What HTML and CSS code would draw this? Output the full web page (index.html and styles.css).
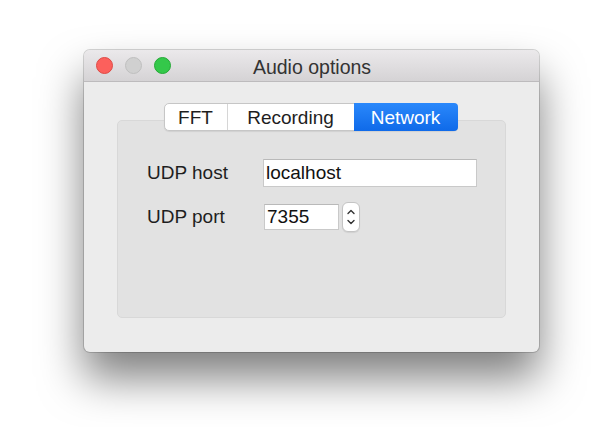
FILE: index.html
```html
<!DOCTYPE html>
<html>
<head>
<meta charset="utf-8">
<link rel="stylesheet" href="styles.css">
</head>
<body>
<div class="window">
  <div class="titlebar">
    <div class="lights">
      <span class="light red"></span>
      <span class="light grey"></span>
      <span class="light green"></span>
    </div>
    <div class="title">Audio options</div>
  </div>
  <div class="content">
    <div class="tabs">
      <div class="tab tab-fft">FFT</div>
      <div class="tab tab-rec">Recording</div>
      <div class="tab tab-net active">Network</div>
    </div>
    <div class="panel">
      <div class="form">
        <div class="label">UDP host</div>
        <div class="field host">localhost</div>
        <div class="label">UDP port</div>
        <div class="port-row">
          <div class="field port">7355</div>
          <div class="stepper">
            <svg width="10" height="22" viewBox="0 0 10 22">
              <path d="M2 7.5 L5 4.5 L8 7.5" fill="none" stroke="#333" stroke-width="1.4" stroke-linecap="round" stroke-linejoin="round"/>
              <path d="M2 14.5 L5 17.5 L8 14.5" fill="none" stroke="#333" stroke-width="1.4" stroke-linecap="round" stroke-linejoin="round"/>
            </svg>
          </div>
        </div>
      </div>
    </div>
  </div>
</div>
</body>
</html>
```
FILE: styles.css
```css
html, body {
  margin: 0;
  padding: 0;
  background: #ffffff;
}
body {
  font-family: "Liberation Sans", Arial, sans-serif;
  padding-top: 50px;
  padding-left: 84px;
  min-height: 427px;
  box-sizing: border-box;
}
.window {
  width: 455px;
  height: 302px;
  background: #ececec;
  border-radius: 6px;
  box-shadow: 0 0 0 1px rgba(0,0,0,0.16), 0 26px 44px rgba(0,0,0,0.5);
  overflow: hidden;
  box-sizing: border-box;
}
.titlebar {
  height: 31px;
  background: linear-gradient(#ebe9eb, #d5d3d5);
  border-bottom: 1px solid #bdbbbd;
  display: flex;
  align-items: center;
  position: relative;
}
.lights {
  display: flex;
  gap: 12px;
  padding-left: 12px;
}
.light {
  width: 17px;
  height: 17px;
  border-radius: 50%;
  box-sizing: border-box;
  display: block;
}
.red { background: #fc605c; border: 1px solid #de4a45; }
.grey { background: #d0d0d0; border: 1px solid #bfbfbf; }
.green { background: #34c84a; border: 1px solid #24a936; }
.title {
  position: absolute;
  left: 0;
  right: 0;
  text-align: center;
  font-size: 19.5px;
  color: #333333;
  top: 6px;
  padding-left: 1px;
}
.content {
  padding: 21px 33px 0 33px;
}
.tabs {
  display: flex;
  width: 294px;
  margin: 0 auto -11px auto;
  position: relative;
  left: -1px;
  z-index: 1;
  height: 28px;
  box-sizing: border-box;
  border: 1px solid #c6c6c6;
  border-radius: 5px;
  background: #ffffff;
  box-shadow: 0 1px 1px rgba(0,0,0,0.08);
}
.tab {
  font-size: 19px;
  color: #1e1e1e;
  display: flex;
  align-items: center;
  justify-content: center;
  box-sizing: border-box;
  line-height: 1;
}
.tab-fft { width: 63px; border-right: 1px solid #d6d6d6; }
.tab-rec { width: 126px; }
.tab-net { flex: 1; }
.tab.active {
  background: linear-gradient(#2a88fb, #0f6ae9);
  color: #ffffff;
  border-radius: 0 4px 4px 0;
  margin: -1px -1px -1px 0;
}
.panel {
  height: 198px;
  box-sizing: border-box;
  background: #e2e2e2;
  border: 1px solid #d8d8d8;
  border-radius: 5px;
  padding: 38px 0 0 29px;
}
.form {
  display: grid;
  grid-template-columns: 116px auto;
  grid-template-rows: 28px 30px;
  row-gap: 15px;
  align-items: center;
}
.label {
  font-size: 19px;
  color: #1e1e1e;
}
.field {
  background: #ffffff;
  box-sizing: border-box;
  border: 1px solid #c9c9c9;
  border-top-color: #b9b9b9;
  font-size: 19px;
  color: #111;
  display: flex;
  align-items: center;
  padding-left: 2px;
}
.host {
  width: 214px;
  height: 28px;
}
.port-row {
  display: flex;
  align-items: center;
  gap: 3px;
  padding-left: 1px;
}
.port {
  width: 75px;
  height: 26px;
}
.stepper {
  width: 18px;
  height: 30px;
  box-sizing: border-box;
  background: #ffffff;
  border: 1px solid #c4c4c4;
  border-radius: 6px;
  display: flex;
  align-items: center;
  justify-content: center;
  box-shadow: 0 1px 1px rgba(0,0,0,0.08);
}
.stepper svg { display: block; }
```
